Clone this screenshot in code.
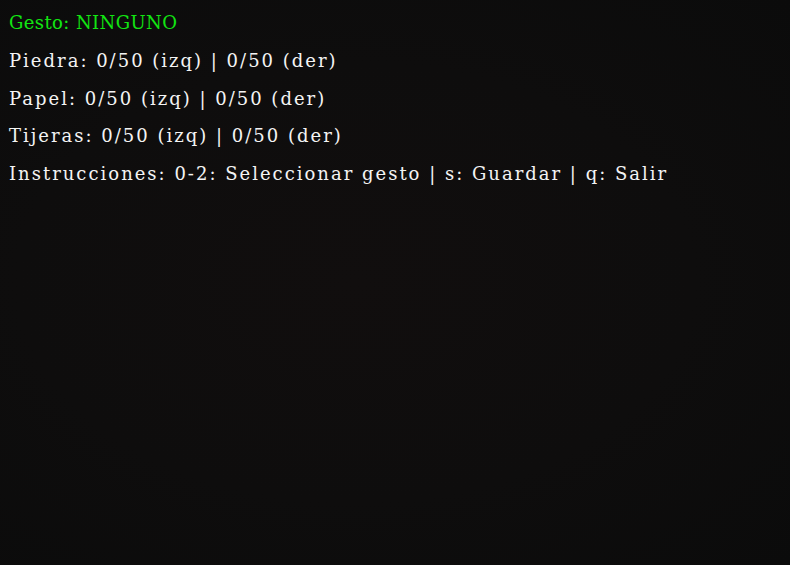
import React from "react";

const lines = [
  "Piedra: 0/50 (izq) | 0/50 (der)",
  "Papel: 0/50 (izq) | 0/50 (der)",
  "Tijeras: 0/50 (izq) | 0/50 (der)",
  "Instrucciones: 0-2: Seleccionar gesto | s: Guardar | q: Salir",
];

export default function App() {
  return (
    <div className="w-[790px] h-[565px] overflow-hidden bg-[radial-gradient(ellipse_at_45%_50%,#110e0e_0%,#0e0d0d_55%,#0b0b0b_100%)] font-['DejaVu_Serif',serif] text-[18px] pt-[11px] pl-[9px]">
      <div className="h-[38px] leading-[24px] text-[#12e412] tracking-[0.4px] whitespace-pre">Gesto: NINGUNO</div>
      {lines.map((l) => (
        <div key={l} className="h-[37.5px] leading-[24px] text-[#f4f4f4] tracking-[2px] whitespace-pre">
          {l}
        </div>
      ))}
    </div>
  );
}
